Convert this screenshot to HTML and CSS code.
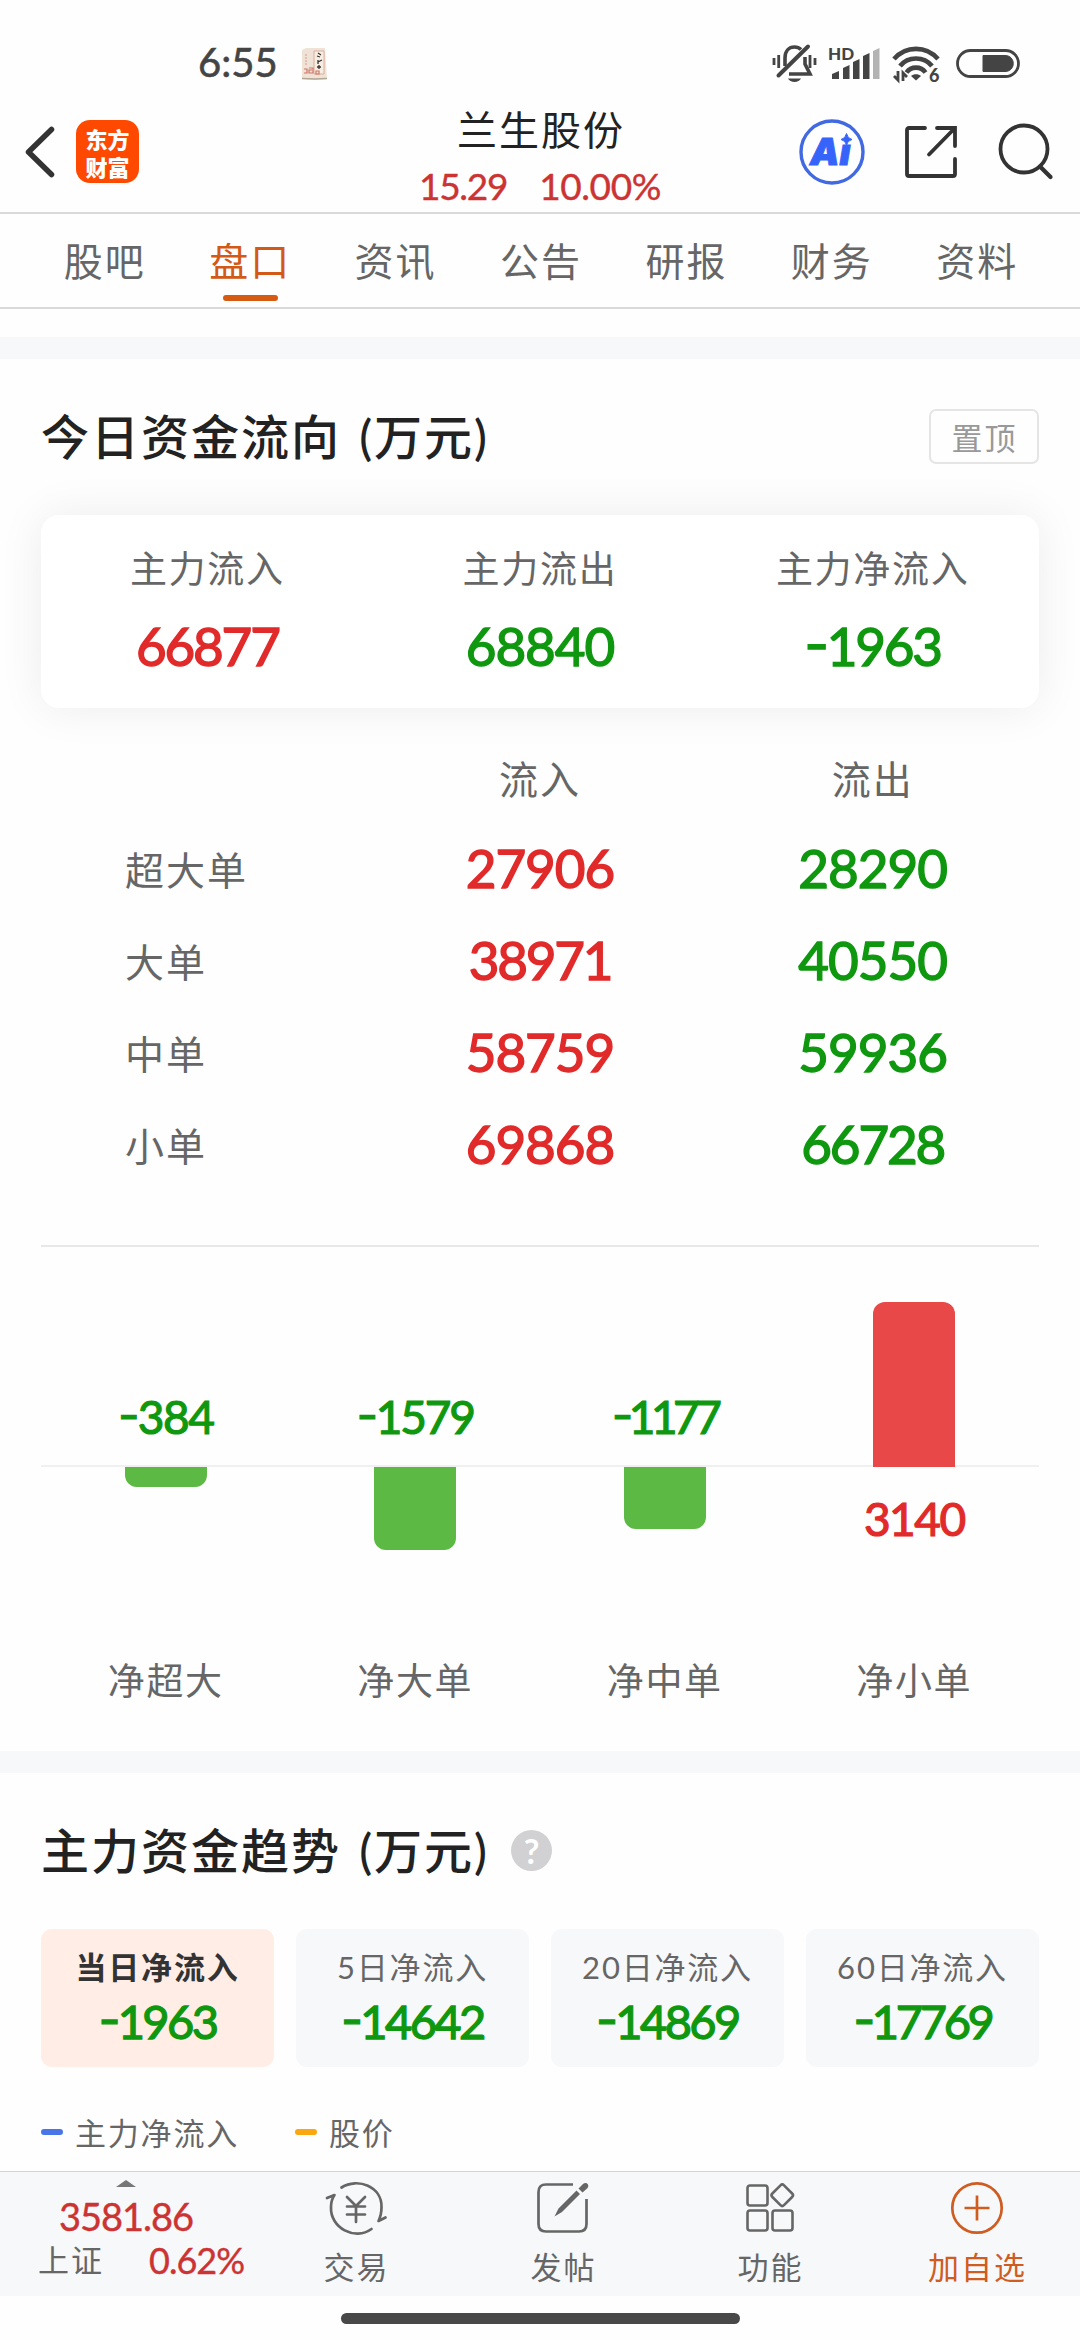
FILE: index.html
```html
<!DOCTYPE html>
<html lang="zh-CN">
<head>
<meta charset="utf-8">
<title>兰生股份</title>
<link rel="stylesheet" href="styles.css">
</head>
<body>
<div class="screen">
  <div class="statusbar">
    <span class="clock">6:55</span>
    <svg class="note" viewBox="0 0 26 33"><path d="M1 2L5 0H24L26 31L14 32L1 31Z" fill="#eee3d6"/><path d="M1 30.500L14 31L26 30.500" stroke="#b3a694" stroke-width="1.500" fill="none"/><path d="M13 3H23V26H13Z" fill="#f6eee3" stroke="#dc9c8c" stroke-width=".8"/><path d="M17 5L20 7M16 8L19 9M17 12V16M17 14L21 12M16 19H20M18 17V21" stroke="#3a3230" stroke-width="1.300"/><path d="M5 6V18" stroke="#e5b9ac" stroke-width="1.800" stroke-dasharray="2 1"/><path d="M3 21H6V25H3M8 20H12V25H8V22H11M15 23H18V26H15Z" stroke="#cf7466" stroke-width="1.200" fill="none"/></svg>
    <svg class="sysicons" viewBox="0 0 250 40">
      <g fill="none" stroke="#444" stroke-width="3.600">
        <path d="M6.500 32.500L36 3.500" stroke-width="4" stroke-linecap="round"/>
        <path d="M13 23V15C13 8 17 4 22.500 4C25 4 27.500 5 29 6.500M33 14V21L38 31H17"/>
        <path d="M2 15V22M6.700 12V25M38 12V25M43 15V22" stroke-width="2.800"/>
      </g>
      <path d="M16 35.500H29C27 40 18 40 16 35.500Z" fill="#444"/>
      <text x="56" y="16.500" class="hd">HD</text>
      <path d="M60 31L67 28V36H60ZM71 25L77.500 22V36H71ZM81 19L87.500 16V36H81ZM91 13L97.500 10V36H91Z" fill="#444"/>
      <path d="M101 8L107.500 5V36H101Z" fill="#b3b3b3"/>
      <g fill="none" stroke="#444" stroke-width="4.600">
        <path d="M122 16C134 2.500 154 2.500 166 16"/>
        <path d="M128 23C136 13 152 13 160 23"/>
        <path d="M134.500 29.500C139 23 149 23 153.500 29.500"/>
      </g>
      <path d="M139 33C141.500 30.500 146.500 30.500 149 33L144 37.500Z" fill="#444"/>
      <path d="M122 33L126 37V28M131 38V30L135 34" fill="none" stroke="#444" stroke-width="2.800"/>
      <text x="157" y="38.500" class="six">6</text>
      <rect x="185.500" y="7.500" width="61" height="26" rx="13" fill="none" stroke="#444" stroke-width="2.800"/>
      <path d="M211 12.500H233C244 12.500 244 28.500 233 28.500H211Z" fill="#444" stroke="#444"/>
    </svg>
  </div>

  <header class="header">
    <svg class="back" viewBox="0 0 30 52"><path d="M26.500 3.500L3.500 26L26.500 48.500" fill="none" stroke="#333" stroke-width="5.500" stroke-linecap="round" stroke-linejoin="round"/></svg>
    <div class="logo"><span>东方</span><span>财富</span></div>
    <div class="stock">
      <div class="stock-name">兰生股份</div>
      <div class="stock-quote"><span class="price">15.29</span><span>10.00%</span></div>
    </div>
    <div class="actions">
      <svg class="ai" viewBox="0 0 66 66"><circle cx="33" cy="33" r="31" fill="none" stroke="#4169e1" stroke-width="3.400"/><text x="11" y="46" class="ai-text">Aı</text><path d="M47.500 14.500Q48.500 19.500 53 20.500Q48.500 21.500 47.500 26Q46.500 21.500 42 20.500Q46.500 19.500 47.500 14.500Z" fill="#3664fa" stroke="#3664fa"/></svg>
      <svg class="share" viewBox="0 0 54 54"><path d="M21 3H5Q3 3 3 5V49Q3 51 5 51H49Q51 51 51 49V34M33 3H51V21M50 4L25 29.500" fill="none" stroke="#333" stroke-width="3.800" stroke-linecap="round"/></svg>
      <svg class="search" viewBox="0 0 56 56"><circle cx="26" cy="25" r="23.500" fill="none" stroke="#333" stroke-width="3.800"/><path d="M42 42.500L52.500 53" stroke="#333" stroke-width="4.200" stroke-linecap="round"/></svg>
    </div>
  </header>

  <nav class="tabs">
    <span>股吧</span><span class="active">盘口</span><span>资讯</span><span>公告</span><span>研报</span><span>财务</span><span>资料</span>
  </nav>

  <main class="content">
    <section class="section flow">
      <div class="section-head">
        <h2>今日资金流向 <span class="unit">(万元)</span></h2>
        <button class="pin">置顶</button>
      </div>
      <div class="summary">
        <div><span class="label">主力流入</span><span class="num red tight">66877</span></div>
        <div><span class="label">主力流出</span><span class="num green">68840</span></div>
        <div><span class="label">主力净流入</span><span class="num green tight"><span class="minus">-</span>1963</span></div>
      </div>
      <div class="orders">
        <span></span><span class="th">流入</span><span class="th">流出</span>
        <span class="name">超大单</span><span class="num red">27906</span><span class="num green">28290</span>
        <span class="name">大单</span><span class="num red tight">38971</span><span class="num green">40550</span>
        <span class="name">中单</span><span class="num red">58759</span><span class="num green">59936</span>
        <span class="name">小单</span><span class="num red">69868</span><span class="num green tight">66728</span>
      </div>
      <div class="chart">
        <div class="col"><div class="up"><span class="val green"><span class="minus">-</span>384</span></div><div class="down"><i class="bar" style="height:20px"></i></div><span class="cat">净超大</span></div>
        <div class="col"><div class="up"><span class="val green tight"><span class="minus">-</span>1579</span></div><div class="down"><i class="bar" style="height:83px"></i></div><span class="cat">净大单</span></div>
        <div class="col"><div class="up"><span class="val green tighter"><span class="minus">-</span>1177</span></div><div class="down"><i class="bar" style="height:62px"></i></div><span class="cat">净中单</span></div>
        <div class="col"><div class="up"><i class="bar pos" style="height:165px"></i></div><div class="down"><span class="val red">3140</span></div><span class="cat">净小单</span></div>
      </div>
    </section>

    <section class="section trend">
      <div class="section-head">
        <h2>主力资金趋势 <span class="unit">(万元)</span></h2>
        <span class="help">?</span>
      </div>
      <div class="periods">
        <div class="period on"><span>当日净流入</span><b><i class="minus">-</i>1963</b></div>
        <div class="period"><span>5日净流入</span><b><i class="minus">-</i>14642</b></div>
        <div class="period"><span>20日净流入</span><b><i class="minus">-</i>14869</b></div>
        <div class="period"><span>60日净流入</span><b class="tight"><i class="minus">-</i>17769</b></div>
      </div>
      <div class="legend">
        <span class="key blue">主力净流入</span><span class="key amber">股价</span>
      </div>
    </section>
  </main>

  <footer class="toolbar">
    <div class="index">
      <i class="caret"></i>
      <span class="index-value">3581.86</span>
      <div class="index-row"><span class="index-name">上证</span><span class="index-pct">0.62%</span></div>
    </div>
    <div class="tool">
      <svg viewBox="0 0 60 54"><g fill="none" stroke="#666" stroke-width="2.700" stroke-linecap="round" stroke-linejoin="round"><path d="M15.500 6.500C32 -4 56 6 55.500 26Q55.500 34 52.500 40L59.500 36.500"/><path d="M45.500 48C29 60 4 47 5 26Q5 19 8.500 14L1 17"/><path d="M21 16L30 25L39 16M21 25.500H39M21 33.500H39M30 25V41"/></g></svg>
      <span>交易</span>
    </div>
    <div class="tool">
      <svg viewBox="0 0 60 54"><path d="M40 3.500H13Q5.500 3.500 5.500 11V43Q5.500 50.500 13 50.500H46Q53.500 50.500 53.500 43V18" fill="none" stroke="#666" stroke-width="2.700"/><path d="M43.500 9.500L47 13L29 31L21.500 35.500L25.500 27.500ZM45.500 7.500L50 3Q53 1 55 3.500Q56 6 53.500 8L49.500 11.500Z" fill="#666"/></svg>
      <span>发帖</span>
    </div>
    <div class="tool">
      <svg viewBox="0 0 60 54"><g fill="none" stroke="#666" stroke-width="2.600"><rect x="7.500" y="4.500" width="20" height="20" rx="2.500"/><rect x="7.500" y="29.500" width="20" height="20" rx="2.500"/><rect x="32.500" y="29.500" width="20" height="20" rx="2.500"/><rect x="34" y="6" width="16.500" height="16.500" rx="2.500" transform="rotate(45 42.250 14.250)"/></g></svg>
      <span>功能</span>
    </div>
    <div class="tool add">
      <svg viewBox="0 0 60 54"><g fill="none" stroke="#cf5c21" stroke-width="2.700"><circle cx="30" cy="27" r="24.700"/><path d="M17.500 27H42.500M30 14.500V39.500"/></g></svg>
      <span>加自选</span>
    </div>
  </footer>
  <div class="homebar"><i></i></div>
</div>
</body>
</html>
```
FILE: styles.css
```css
* { box-sizing: border-box; }
body { margin: 0; background: #fff; }
.screen {
  width: 1080px; height: 2340px; overflow: hidden;
  display: flex; flex-direction: column;
  font-family: Lato, "Noto Sans CJK SC", sans-serif;
  color: #666; background: #fefefe; white-space: nowrap;
}
svg { display: block; flex: none; overflow: visible; }

.statusbar { height: 100px; display: flex; align-items: flex-start; padding: 42px 58px 0 198px; }
.clock { font-size: 40px; line-height: 40px; color: #444; width: 103px; -webkit-text-stroke: .6px; }
.note { width: 26px; height: 33px; margin-top: 6px; }
.sysicons { width: 250px; height: 40px; margin-left: auto; margin-top: 1px; }
.hd { font: 900 17px Lato, sans-serif; fill: #444; }
.six { font: 900 18px Lato, sans-serif; fill: #444; }

.header { height: 114px; display: grid; grid-template-columns: 51px 265px 398px 1fr; border-bottom: 2px solid #d9d9d9; padding-left: 25px; }
.back { width: 30px; height: 52px; margin-top: 26px; }
.logo {
  width: 63px; height: 63px; margin-top: 20px; border-radius: 14px; background: #ff4800; color: #fff;
  font: 900 22px/28px "Noto Sans CJK SC", sans-serif; display: flex; flex-direction: column; align-items: center; justify-content: center;
}
.stock { text-align: center; }
.stock-name { font-size: 40px; line-height: 60px; letter-spacing: 2px; color: #222; margin-left: 2px; }
.stock-quote { display: flex; justify-content: center; gap: 32px; font-size: 37px; line-height: 52px; color: #cc3333; letter-spacing: -.4px; -webkit-text-stroke: .4px; }
.price { letter-spacing: -1.300px; }
.actions { display: flex; padding: 19px 26px 0 60px; }
.ai { width: 66px; height: 66px; }
.ai-text { font: italic 900 37px Inter, sans-serif; fill: #3664fa; stroke: #3664fa; stroke-width: 1px; }
.share { width: 54px; height: 54px; margin: 6px 0 0 39px; }
.search { width: 56px; height: 56px; margin: 5px 0 0 40px; }

.tabs { height: 95px; padding: 0 31px; display: grid; grid-template-columns: repeat(7, 1fr); border-bottom: 2px solid #d9d9d9; }
.tabs span { display: flex; flex-direction: column; align-items: center; font-size: 39px; line-height: 94px; height: 93px; letter-spacing: 2px; padding-left: 2px; }
.tabs .active { color: #d25a16; }
.tabs .active::after { content: ""; width: 55px; height: 6px; margin-top: -13px; border-radius: 3px; background: #d75a12; }

.content { flex: none; height: 1862px; padding-top: 28px; overflow: hidden; }
.section { border-top: 22px solid #f7f8fa; padding: 0 41px; }
.flow { height: 1414px; }
.section-head { display: flex; align-items: center; height: 156px; }
h2 { margin: 0; font-size: 48px; font-weight: 500; letter-spacing: 2px; color: #222; line-height: 68px; }
.unit { margin-left: 4px; }
.pin { margin-left: auto; width: 110px; height: 55px; margin-bottom: 1px; border: 2px solid #e5e5e5; border-radius: 7px; background: none; padding: 0 0 0 1px; font: 31px/46px "Noto Sans CJK SC", sans-serif; letter-spacing: 2px; color: #999; }

.summary { height: 193px; border-radius: 18px; background: #fff; box-shadow: 0 0 46px rgba(0, 0, 0, .075); display: grid; grid-template-columns: repeat(3, 1fr); }
.summary > div { display: flex; flex-direction: column; align-items: center; padding-top: 27px; }
.label { font-size: 37px; line-height: 54px; letter-spacing: 1.700px; }
.num { font-size: 53px; line-height: 64px; letter-spacing: -1px; text-align: center; -webkit-text-stroke: 1.400px; }
.num.tight { letter-spacing: -2.200px; }
.summary .num { margin-top: 18px; }
.red { color: #e12a2a; }
.green { color: #0f980f; }
.minus { font-family: Inter, sans-serif; font-style: normal; font-feature-settings: "case"; line-height: 1; }

.orders { display: grid; grid-template-columns: repeat(3, 1fr); grid-template-rows: 91px repeat(4, 92px); margin-top: 23px; height: 516px; align-items: center; border-bottom: 2px solid #e8e8e8; padding-bottom: 57px; }
.th { font-size: 39px; letter-spacing: 2px; text-align: center; }
.name { font-size: 39px; letter-spacing: 2px; padding-left: 84px; }

.chart { height: 503px; display: grid; grid-template-columns: repeat(4, 1fr); }
.col { display: grid; grid-template-rows: 220px 174px 1fr; justify-items: center; text-align: center; }
.up, .down { width: 100%; display: flex; flex-direction: column; align-items: center; }
.up { justify-content: flex-end; }
.down { box-shadow: 0 -2px #f0f0f0; }
.bar { width: 82px; background: #5bb944; border-radius: 0 0 12px 12px; }
.bar.pos { background: #e84848; border-radius: 12px 12px 0 0; z-index: 1; }
.val { font-size: 46px; line-height: 56px; letter-spacing: -1.500px; -webkit-text-stroke: 1.200px; }
.val.tight { letter-spacing: -2.200px; }
.val.tighter { letter-spacing: -4.500px; }
.up .val { margin-bottom: 22px; }
.down .val { margin-top: 24px; }
.cat { font-size: 37px; line-height: 54px; letter-spacing: 1.700px; margin-top: 13px; }

.help { width: 41px; height: 41px; border-radius: 50%; background: #d1d1d3; color: #fff; font: 700 34px/41px Lato, sans-serif; text-align: center; margin: 0 0 2px 22px; }
.periods { display: grid; grid-template-columns: repeat(4, 1fr); gap: 22px; }
.period { height: 138px; border-radius: 11px; background: #f7f8fa; display: flex; flex-direction: column; align-items: center; padding-top: 16px; }
.period span { font-size: 31px; line-height: 44px; letter-spacing: 1.800px; }
.period b { font-size: 47px; line-height: 56px; margin-top: 4px; font-weight: 400; letter-spacing: -2.600px; color: #0f980f; -webkit-text-stroke: 1.300px; }
.period b.tight { letter-spacing: -3.300px; }
.period.on { background: #ffede6; }
.period.on span { color: #333; font-weight: 700; }
.legend { display: flex; gap: 56px; height: 66px; margin-top: 31px; align-items: center; }
.key { display: flex; align-items: center; gap: 12px; font-size: 31px; letter-spacing: 1.800px; }
.key::before { content: ""; width: 22px; height: 6px; border-radius: 3px; background: #4876e8; margin-top: 1px; }
.amber::before { background: #fba70f; }

.toolbar { height: 125px; display: grid; grid-template-columns: 252px repeat(4, 207px); background: #f7f8fa; border-top: 1px solid #d2d5d4; }
.index { display: flex; flex-direction: column; align-items: center; color: #cc3333; }
.caret { border: 10px solid transparent; border-top: 0; border-bottom: 7px solid #777; margin-top: 8px; }
.index-value { font-size: 38px; line-height: 44px; margin-top: 7px; letter-spacing: -1px; -webkit-text-stroke: .4px; }
.index-row { display: flex; justify-content: space-between; width: 206px; line-height: 44px; margin-left: 30px; }
.index-name { font-size: 31px; color: #666; letter-spacing: 2px; }
.index-pct { font-size: 36px; letter-spacing: -1px; -webkit-text-stroke: .4px; }
.tool { display: flex; flex-direction: column; align-items: center; padding-top: 9px; }
.tool svg { width: 60px; height: 54px; }
.tool span { font-size: 31px; line-height: 44px; letter-spacing: 2px; margin: 10px 0 0 2px; }
.add { color: #cf5c21; }
.homebar { height: 44px; display: flex; justify-content: center; padding-top: 17px; }
.homebar i { width: 399px; height: 11px; border-radius: 6px; background: #484848; }
```
